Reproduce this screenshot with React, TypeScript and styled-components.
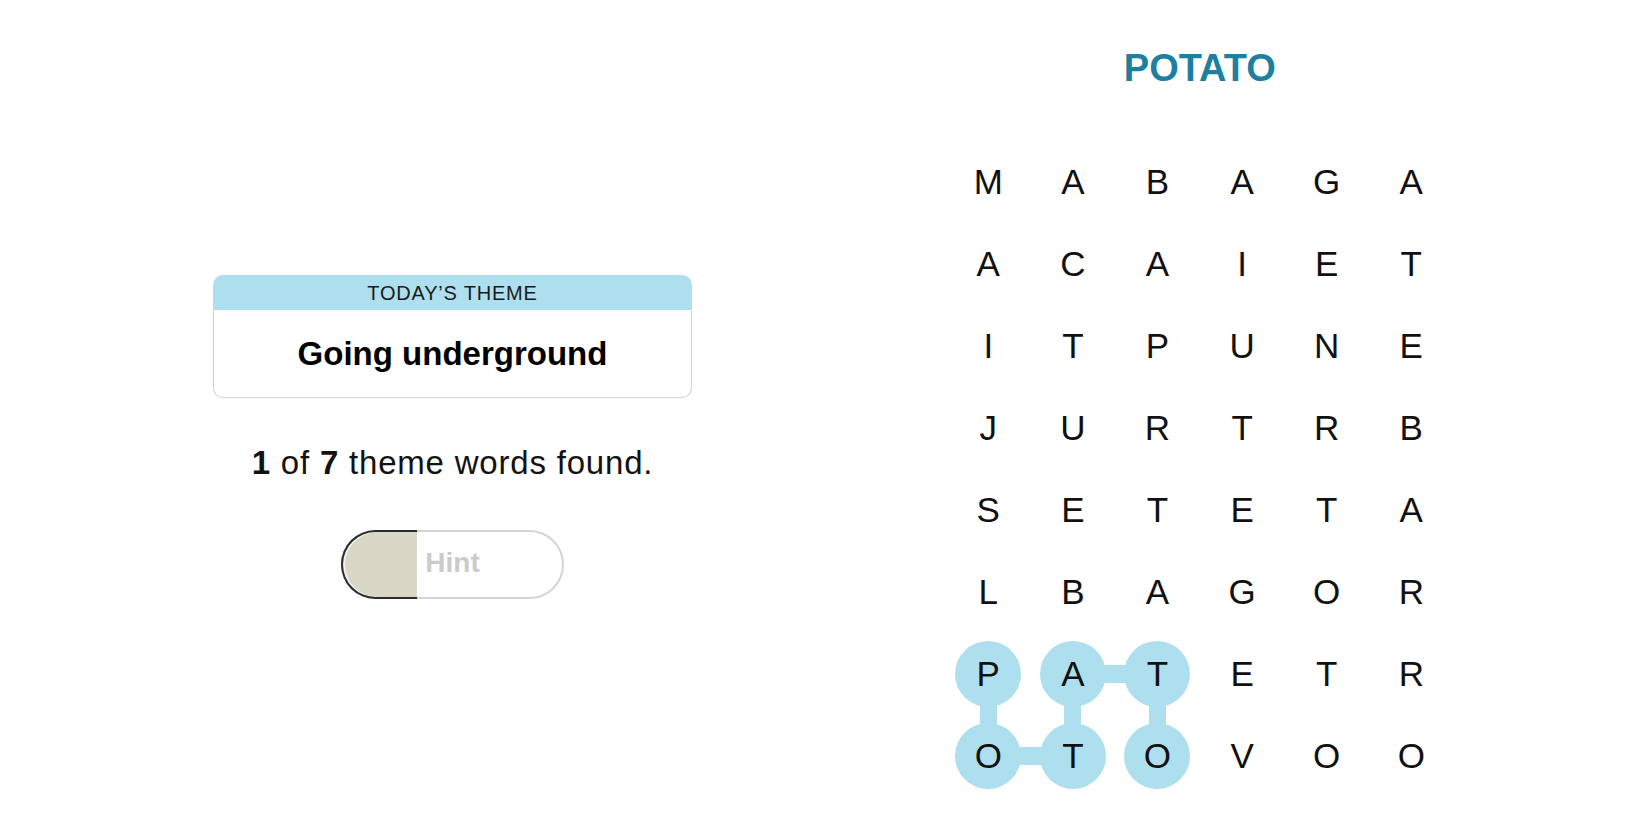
import React from "react";
import styled, { createGlobalStyle } from "styled-components";

const GlobalStyle = createGlobalStyle`
  html, body {
    margin: 0;
    padding: 0;
    background: #ffffff;
    font-family: "Liberation Sans", Arial, sans-serif;
    color: #121212;
  }
`;

const CELL_W = 84.6;
const CELL_H = 82;

const Page = styled.main`
  display: flex;
  align-items: flex-start;
  gap: 254px;
  width: 1650px;
  height: 825px;
  padding-left: 213px;
  box-sizing: border-box;
  overflow: hidden;
`;

const LeftColumn = styled.section`
  display: flex;
  flex-direction: column;
  align-items: center;
  width: 479px;
  padding-top: 275px;
`;

const ThemeCard = styled.div`
  display: flex;
  flex-direction: column;
  width: 100%;
`;

const ThemeHeader = styled.div`
  height: 35px;
  display: flex;
  align-items: center;
  justify-content: center;
  padding-top: 2px;
  box-sizing: border-box;
  background: #aedfee;
  border-radius: 10px 10px 0 0;
  font-size: 20px;
  letter-spacing: 0.8px;
  color: #1a1a1a;
`;

const ThemeBody = styled.div`
  height: 87px;
  display: flex;
  align-items: center;
  justify-content: center;
  border: 1px solid #d2d2d2;
  border-top: none;
  border-radius: 0 0 10px 10px;
  font-size: 33px;
  font-weight: 700;
  color: #000;
`;

const FoundText = styled.p`
  margin: 45px 0 0;
  font-size: 33px;
  line-height: 40px;
  letter-spacing: 0.8px;
  color: #121212;

  b {
    font-weight: 700;
  }
`;

const HintButton = styled.button`
  position: relative;
  margin-top: 47px;
  width: 223px;
  height: 69px;
  box-sizing: border-box;
  border: 2px solid #d4d4d4;
  border-radius: 35px;
  background: #fff;
  font-family: "Liberation Sans", Arial, sans-serif;
  font-size: 28px;
  font-weight: 700;
  color: #cbcbcb;
  padding: 0 0 4px;
  cursor: pointer;
`;

const HintFill = styled.span`
  position: absolute;
  top: -2px;
  bottom: -2px;
  left: -2px;
  box-sizing: border-box;
  border: 2px solid #2b2b2b;
  border-right: none;
  border-radius: 35px 0 0 35px;
  background: #d9d8c6;
  box-shadow: inset 2px 0 0 #f4f4ee;
`;

const HintLabel = styled.span`
  position: relative;
`;

const RightColumn = styled.section`
  display: flex;
  flex-direction: column;
  align-items: center;
  padding-top: 45px;
`;

const FoundWord = styled.h1`
  margin: 0;
  font-size: 38px;
  line-height: 46px;
  font-weight: 700;
  color: #1d7fa2;
`;

const Board = styled.div`
  margin-top: 50px;
  display: grid;
  grid-template-columns: repeat(6, ${CELL_W}px);
  grid-auto-rows: ${CELL_H}px;
`;

const Cell = styled.div<{ $on: boolean }>`
  position: relative;
  display: flex;
  align-items: center;
  justify-content: center;
  font-size: 35px;
  color: #111;

  &::before {
    content: "";
    position: absolute;
    width: 66px;
    height: 66px;
    border-radius: 50%;
    background: #aedfee;
    display: ${({ $on }) => ($on ? "block" : "none")};
  }
`;

// connector from a cell centre to its neighbour on the right or below
const Link = styled.span<{ $dir: "right" | "down" }>`
  position: absolute;
  background: #aedfee;
  ${({ $dir }) =>
    $dir === "right"
      ? `left: 50%; top: calc(50% - 9px); width: ${CELL_W}px; height: 18px;`
      : `top: 50%; left: calc(50% - 8.5px); height: ${CELL_H}px; width: 17px;`}
`;

const Letter = styled.span`
  position: relative;
  z-index: 2;
`;

const LETTERS = [
  "MABAGA",
  "ACAIET",
  "ITPUNE",
  "JURTRB",
  "SETETA",
  "LBAGOR",
  "PATETR",
  "OTOVOO",
];

// cells of the found word and the links between them
const FOUND: Record<string, { right?: boolean; down?: boolean }> = {
  "6-0": { down: true },
  "7-0": { right: true },
  "6-1": { down: true, right: true },
  "7-1": {},
  "6-2": { down: true },
  "7-2": {},
};

export default function App() {
  return (
    <>
      <GlobalStyle />
      <Page>
        <LeftColumn>
          <ThemeCard>
            <ThemeHeader>TODAY’S THEME</ThemeHeader>
            <ThemeBody>Going underground</ThemeBody>
          </ThemeCard>
          <FoundText>
            <b>1</b> of <b>7</b> theme words found.
          </FoundText>
          <HintButton>
            <HintFill style={{ width: 76 }} />
            <HintLabel>Hint</HintLabel>
          </HintButton>
        </LeftColumn>
        <RightColumn>
          <FoundWord>POTATO</FoundWord>
          <Board>
            {LETTERS.map((row, r) =>
              row.split("").map((ch, c) => {
                const f = FOUND[`${r}-${c}`];
                return (
                  <Cell key={`${r}-${c}`} $on={!!f}>
                    {f?.right && <Link $dir="right" />}
                    {f?.down && <Link $dir="down" />}
                    <Letter>{ch}</Letter>
                  </Cell>
                );
              })
            )}
          </Board>
        </RightColumn>
      </Page>
    </>
  );
}
